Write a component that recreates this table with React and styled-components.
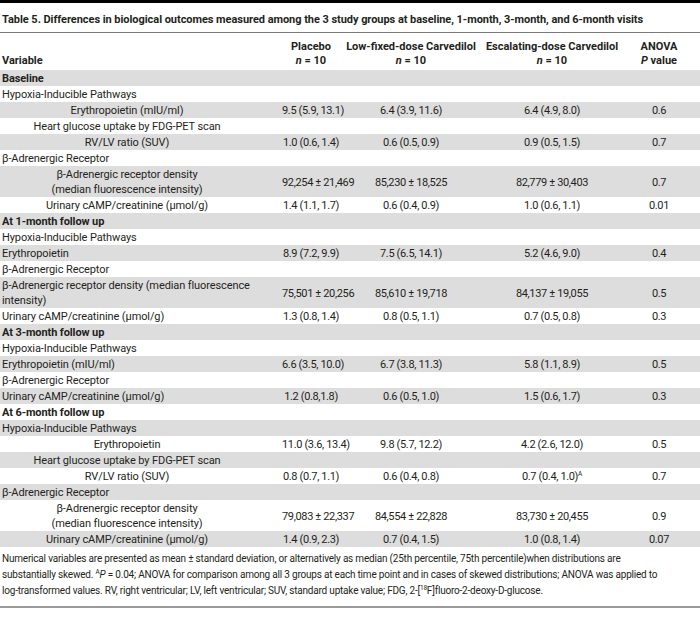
import React from "react";
import styled, { createGlobalStyle } from "styled-components";

const Global = createGlobalStyle`
  html, body { margin: 0; padding: 0; background: #ffffff; }
  body { font-family: Roboto, "Liberation Sans", sans-serif; color: #231f20; }
`;

const Page = styled.div`
  width: 700px;
  border-top: 3px solid #000;
  font-size: 11px;
`;

const Title = styled.h1`
  margin: 0;
  padding: 9px 2px 5px;
  font-size: 11px;
  font-weight: 700;
  line-height: 15px;
  letter-spacing: -0.05px;
  border-bottom: 1px solid #7a7a7a;
  white-space: nowrap;
`;

const Table = styled.table`
  width: 700px;
  border-collapse: collapse;
  table-layout: fixed;
`;

const HeadCell = styled.th`
  padding: ${(p) => p.$pad};
  padding-top: 7px;
  padding-bottom: 2px;
  font-weight: 700;
  line-height: 14px;
  vertical-align: bottom;
  white-space: nowrap;
  text-align: ${(p) => (p.$left ? "left" : "center")};
`;

const Row = styled.tr`
  background: ${(p) => (p.$shade ? "#dddddd" : "#ffffff")};
`;

const LabelCell = styled.td`
  padding: 1px 0 0 2px;
  line-height: 15px;
  letter-spacing: -0.1px;
  white-space: nowrap;
  text-align: ${(p) => (p.$center ? "center" : "left")};
  font-weight: ${(p) => (p.$bold ? 700 : 400)};
  vertical-align: middle;
`;

const ValueCell = styled.td`
  padding: ${(p) => p.$pad};
  padding-top: 1px;
  line-height: 15px;
  letter-spacing: -0.35px;
  text-align: center;
  vertical-align: middle;
  white-space: nowrap;
`;

const Sup = styled.sup`
  font-size: 6.5px;
  line-height: 0;
  vertical-align: 4px;
`;

const Footnote = styled.p`
  margin: 0;
  padding: 4px 2px 7px;
  font-size: 10px;
  letter-spacing: -0.2px;
  line-height: 16px;
  border-bottom: 2px solid #9a9a9a;
`;

const columns = [
  { width: 252, pad: "0 0 0 2px" },
  { width: 88, pad: "0 0 0 30px" },
  { width: 140, pad: "0 0 0 2px" },
  { width: 148, pad: "0 4px 0 0" },
  { width: 72, pad: "0 10px 0 0" },
];

const rows = [
  { label: "Baseline", bold: true },
  { label: "Hypoxia-Inducible Pathways" },
  { label: "Erythropoietin (mIU/ml)", center: true, v: ["9.5 (5.9, 13.1)", "6.4 (3.9, 11.6)", "6.4 (4.9, 8.0)", "0.6"] },
  { label: "Heart glucose uptake by FDG-PET scan", center: true },
  { label: "RV/LV ratio (SUV)", center: true, v: ["1.0 (0.6, 1.4)", "0.6 (0.5, 0.9)", "0.9 (0.5, 1.5)", "0.7"] },
  { label: "β-Adrenergic Receptor" },
  { label: ["β-Adrenergic receptor density", "(median fluorescence intensity)"], center: true, v: ["92,254 ± 21,469", "85,230 ± 18,525", "82,779 ± 30,403", "0.7"] },
  { label: "Urinary cAMP/creatinine (μmol/g)", center: true, v: ["1.4 (1.1, 1.7)", "0.6 (0.4, 0.9)", "1.0 (0.6, 1.1)", "0.01"] },
  { label: "At 1-month follow up", bold: true },
  { label: "Hypoxia-Inducible Pathways" },
  { label: "Erythropoietin", v: ["8.9 (7.2, 9.9)", "7.5 (6.5, 14.1)", "5.2 (4.6, 9.0)", "0.4"] },
  { label: "β-Adrenergic Receptor" },
  { label: ["β-Adrenergic receptor density (median fluorescence", "intensity)"], v: ["75,501 ± 20,256", "85,610 ± 19,718", "84,137 ± 19,055", "0.5"] },
  { label: "Urinary cAMP/creatinine (μmol/g)", v: ["1.3 (0.8, 1.4)", "0.8 (0.5, 1.1)", "0.7 (0.5, 0.8)", "0.3"] },
  { label: "At 3-month follow up", bold: true },
  { label: "Hypoxia-Inducible Pathways" },
  { label: "Erythropoietin (mIU/ml)", v: ["6.6 (3.5, 10.0)", "6.7 (3.8, 11.3)", "5.8 (1.1, 8.9)", "0.5"] },
  { label: "β-Adrenergic Receptor" },
  { label: "Urinary cAMP/creatinine (μmol/g)", v: ["1.2 (0.8,1.8)", "0.6 (0.5, 1.0)", "1.5 (0.6, 1.7)", "0.3"] },
  { label: "At 6-month follow up", bold: true },
  { label: "Hypoxia-Inducible Pathways" },
  { label: "Erythropoietin", center: true, v: ["11.0 (3.6, 13.4)", "9.8 (5.7, 12.2)", "4.2 (2.6, 12.0)", "0.5"] },
  { label: "Heart glucose uptake by FDG-PET scan", center: true },
  { label: "RV/LV ratio (SUV)", center: true, v: ["0.8 (0.7, 1.1)", "0.6 (0.4, 0.8)", "0.7 (0.4, 1.0)", "0.7"], supIdx: 2 },
  { label: "β-Adrenergic Receptor" },
  { label: ["β-Adrenergic receptor density", "(median fluorescence intensity)"], center: true, v: ["79,083 ± 22,337", "84,554 ± 22,828", "83,730 ± 20,455", "0.9"] },
  { label: "Urinary cAMP/creatinine (μmol/g)", center: true, v: ["1.4 (0.9, 2.3)", "0.7 (0.4, 1.5)", "1.0 (0.8, 1.4)", "0.07"] },
];

const headers = [
  null,
  ["Placebo", "n", " = 10"],
  ["Low-fixed-dose Carvedilol", "n", " = 10"],
  ["Escalating-dose Carvedilol", "n", " = 10"],
  ["ANOVA", "P", " value"],
];

function Label({ label }) {
  if (Array.isArray(label)) {
    return (
      <>
        {label[0]}
        <br />
        {label[1]}
      </>
    );
  }
  return label;
}

export default function App() {
  return (
    <Page>
      <Global />
      <Title>
        Table 5. Differences in biological outcomes measured among the 3 study groups at baseline, 1-month, 3-month, and 6-month visits
      </Title>
      <Table>
        <colgroup>
          {columns.map((c, i) => (
            <col key={i} style={{ width: c.width }} />
          ))}
        </colgroup>
        <thead>
          <tr>
            <HeadCell $left $pad={columns[0].pad}>
              Variable
            </HeadCell>
            {headers.slice(1).map((h, i) => (
              <HeadCell key={i} $pad={columns[i + 1].pad}>
                {h[0]}
                <br />
                <i>{h[1]}</i>
                {h[2]}
              </HeadCell>
            ))}
          </tr>
        </thead>
        <tbody>
          {rows.map((r, i) => (
            <Row key={i} $shade={i % 2 === 0}>
              <LabelCell $center={r.center} $bold={r.bold}>
                <Label label={r.label} />
              </LabelCell>
              {(r.v || ["", "", "", ""]).map((val, j) => (
                <ValueCell key={j} $pad={columns[j + 1].pad}>
                  {val}
                  {r.supIdx === j && <Sup>A</Sup>}
                </ValueCell>
              ))}
            </Row>
          ))}
        </tbody>
      </Table>
      <Footnote>
        Numerical variables are presented as mean ± standard deviation, or alternatively as median (25th percentile, 75th percentile)when distributions are
        <br />
        substantially skewed. <Sup>A</Sup>
        <i>P</i> = 0.04; ANOVA for comparison among all 3 groups at each time point and in cases of skewed distributions; ANOVA was applied to
        <br />
        log-transformed values. RV, right ventricular; LV, left ventricular; SUV, standard uptake value; FDG, 2-[<Sup>18</Sup>F]fluoro-2-deoxy-D-glucose.
      </Footnote>
    </Page>
  );
}
